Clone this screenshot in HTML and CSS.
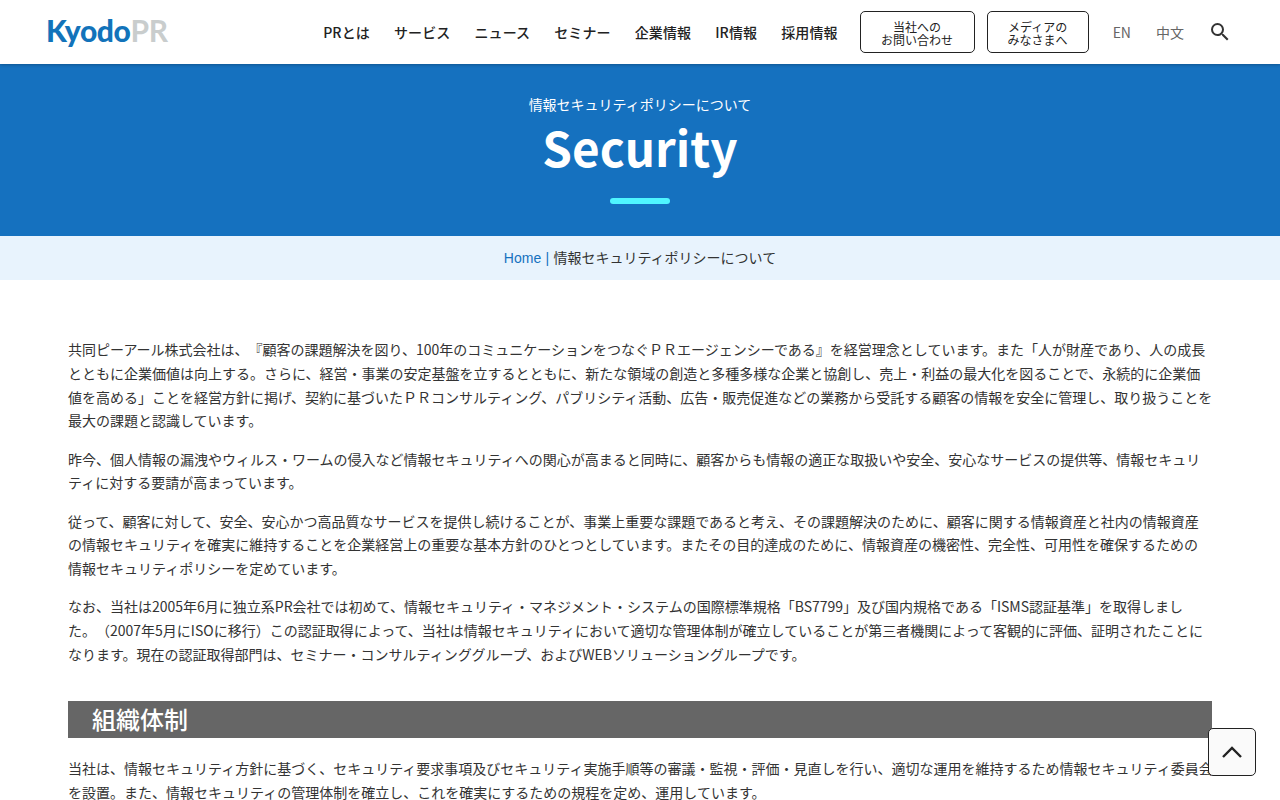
FILE: index.html
```html
<!DOCTYPE html>
<html lang="ja">
<head>
    <meta charset="UTF-8">
    <meta name="viewport" content="width=device-width, initial-scale=1.0">
    <title>情報セキュリティポリシーについて</title>
    <link rel="stylesheet" href="styles.css">
</head>
<body>
    <header class="site-header">
        <a class="logo" href="#"><span class="logo-kyodo">Kyodo</span><span class="logo-pr">PR</span></a>
        <nav class="main-nav">
            <a href="#">PRとは</a>
            <a href="#">サービス</a>
            <a href="#">ニュース</a>
            <a href="#">セミナー</a>
            <a href="#">企業情報</a>
            <a href="#">IR情報</a>
            <a href="#">採用情報</a>
        </nav>
        <a class="head-btn btn-contact" href="#">当社への<br>お問い合わせ</a>
        <a class="head-btn btn-media" href="#">メディアの<br>みなさまへ</a>
        <a class="lang lang-en" href="#">EN</a>
        <a class="lang lang-zh" href="#">中文</a>
        <a class="search" href="#">
            <svg width="24" height="24" viewBox="0 0 24 24"><path fill="#333" d="M15.5 14h-.79l-.28-.27A6.47 6.47 0 0 0 16 9.5 6.5 6.5 0 1 0 9.5 16c1.61 0 3.09-.59 4.23-1.57l.27.28v.79l5 4.99L20.49 19l-4.99-5zm-6 0C7.01 14 5 11.99 5 9.5S7.01 5 9.5 5 14 7.01 14 9.5 11.99 14 9.5 14z"/></svg>
        </a>
    </header>

    <section class="hero">
        <p class="hero-sub">情報セキュリティポリシーについて</p>
        <h1>Security</h1>
        <div class="hero-line"></div>
    </section>

    <div class="breadcrumb"><a href="#">Home</a> <span class="sep">|</span> 情報セキュリティポリシーについて</div>

    <main class="content">
        <p>共同ピーアール株式会社は、『顧客の課題解決を図り、100年のコミュニケーションをつなぐＰＲエージェンシーである』を経営理念としています。また「人が財産であり、人の成長<br>とともに企業価値は向上する。さらに、経営・事業の安定基盤を立するとともに、新たな領域の創造と多種多様な企業と協創し、売上・利益の最大化を図ることで、永続的に企業価<br>値を高める」ことを経営方針に掲げ、契約に基づいたＰＲコンサルティング、パブリシティ活動、広告・販売促進などの業務から受託する顧客の情報を安全に管理し、取り扱うことを<br>最大の課題と認識しています。</p>
        <p>昨今、個人情報の漏洩やウィルス・ワームの侵入など情報セキュリティへの関心が高まると同時に、顧客からも情報の適正な取扱いや安全、安心なサービスの提供等、情報セキュリ<br>ティに対する要請が高まっています。</p>
        <p>従って、顧客に対して、安全、安心かつ高品質なサービスを提供し続けることが、事業上重要な課題であると考え、その課題解決のために、顧客に関する情報資産と社内の情報資産<br>の情報セキュリティを確実に維持することを企業経営上の重要な基本方針のひとつとしています。またその目的達成のために、情報資産の機密性、完全性、可用性を確保するための<br>情報セキュリティポリシーを定めています。</p>
        <p>なお、当社は2005年6月に独立系PR会社では初めて、情報セキュリティ・マネジメント・システムの国際標準規格「BS7799」及び国内規格である「ISMS認証基準」を取得しまし<br>た。（2007年5月にISOに移行）この認証取得によって、当社は情報セキュリティにおいて適切な管理体制が確立していることが第三者機関によって客観的に評価、証明されたことに<br>なります。現在の認証取得部門は、セミナー・コンサルティンググループ、およびWEBソリューショングループです。</p>
        <h2>組織体制</h2>
        <p>当社は、情報セキュリティ方針に基づく、セキュリティ要求事項及びセキュリティ実施手順等の審議・監視・評価・見直しを行い、適切な運用を維持するため情報セキュリティ委員会<br>を設置。また、情報セキュリティの管理体制を確立し、これを確実にするための規程を定め、運用しています。</p>
    </main>

    <a class="to-top" href="#">
        <svg width="20" height="12" viewBox="0 0 20 12"><path fill="none" stroke="#222" stroke-width="2.4" d="M1 11l9-9 9 9"/></svg>
    </a>
</body>
</html>
```
FILE: styles.css
```css
:root {
    --primary-color: #1571bf;
    --text-color: #333;
}
html, body {
    height: 800px;
    overflow: hidden;
}
body {
    margin: 0;
    font-family: "Noto Sans CJK JP", "Noto Sans", sans-serif;
    color: var(--text-color);
    font-size: 14px;
    text-spacing-trim: space-all;
}
a {
    text-decoration: none;
    color: inherit;
}
.site-header {
    height: 64px;
    display: flex;
    align-items: center;
    background-color: white;
    padding: 0 48px 0 46px;
    position: relative;
    z-index: 2;
    box-shadow: 0 1px 3px rgba(0, 0, 0, 0.25);
}
.logo {
    font-family: "Lato", sans-serif;
    font-weight: 900;
    font-size: 30px;
    letter-spacing: -0.4px;
    line-height: 1;
    margin-right: auto;
    position: relative;
    top: -2px;
}
.logo-kyodo {
    color: #1273ba;
}
.logo-pr {
    color: #c9cdcd;
    font-weight: 700;
}
.main-nav {
    display: flex;
    gap: 24px;
    font-weight: 500;
    font-size: 14px;
    letter-spacing: 0.12px;
    color: #222;
}
.head-btn {
    display: block;
    box-sizing: border-box;
    height: 42px;
    border: 1px solid #222;
    border-radius: 5px;
    text-align: center;
    font-size: 12px;
    line-height: 13px;
    padding-top: 8px;
    color: #222;
}
.btn-contact {
    width: 115px;
    margin-left: 22px;
}
.btn-media {
    width: 102px;
    margin-left: 12px;
}
.lang {
    font-size: 14px;
    color: #666;
}
.lang-en {
    margin-left: 24px;
}
.lang-zh {
    margin-left: 25px;
}
.search {
    margin-left: 24px;
    height: 24px;
    width: 24px;
}
.hero {
    height: 172px;
    background-color: var(--primary-color);
    color: white;
    text-align: center;
    overflow: hidden;
}
.hero-sub {
    margin: 30px 0 0;
    font-size: 14px;
    line-height: 20px;
}
.hero h1 {
    margin: -2px 0 0;
    font-size: 47.6px;
    font-weight: 700;
    line-height: 70px;
}
.hero-line {
    width: 60px;
    height: 6px;
    margin: 16px auto 0;
    border-radius: 3px;
    background-color: #4ff5ff;
}
.breadcrumb {
    height: 44px;
    line-height: 44px;
    background-color: #e8f3fd;
    text-align: center;
    font-family: "Liberation Sans", "Noto Sans CJK JP", sans-serif;
    font-size: 14px;
    word-spacing: 0.4px;
}
.breadcrumb a, .breadcrumb .sep {
    color: var(--primary-color);
}
.content {
    margin: 0 68px;
    padding-top: 58px;
}
.content p {
    margin: 0 0 14.4px;
    line-height: 23.8px;
    white-space: nowrap;
}
.content h2 {
    margin: 34px 0 19px;
    height: 37px;
    line-height: 35px;
    padding-left: 24px;
    background-color: #666;
    color: white;
    font-size: 24px;
    font-weight: 500;
}
.to-top {
    position: fixed;
    left: 1208px;
    top: 728px;
    width: 48px;
    height: 48px;
    box-sizing: border-box;
    border: 1px solid #222;
    border-radius: 5px;
    background-color: #fafafa;
    display: flex;
    align-items: center;
    justify-content: center;
}
```
